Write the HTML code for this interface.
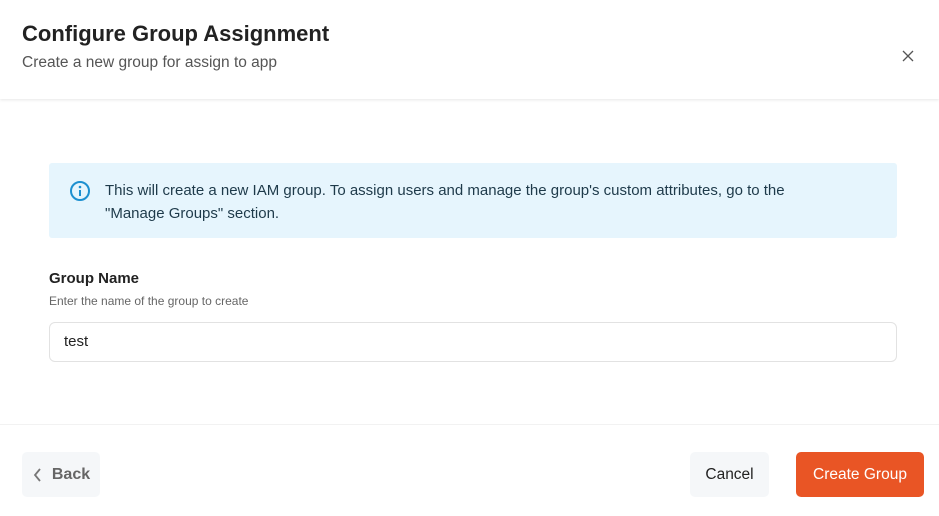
<!DOCTYPE html>
<html><head><meta charset="utf-8"><style>
*{margin:0;padding:0;box-sizing:border-box}
body{width:939px;height:516px;background:#fff;font-family:"Liberation Sans",sans-serif;position:relative;overflow:hidden}
.hdr{position:absolute;left:0;top:0;width:939px;height:99px;background:#fff;box-shadow:0 1px 3px rgba(0,0,0,0.1)}
h1{position:absolute;left:22px;top:21px;font-size:22px;font-weight:bold;color:#222}
.sub{position:absolute;left:22px;top:54px;font-size:15.5px;color:#555}
.x{position:absolute;left:902px;top:50px}
.info{position:absolute;left:49px;top:163px;width:848px;height:75px;background:#e6f5fd;border-radius:3px}
.info svg{position:absolute;left:20px;top:17px}
.info p{position:absolute;left:56px;top:16px;width:740px;font-size:15px;line-height:23px;color:#1e3a4a}
.lbl{position:absolute;left:49px;top:270px;font-size:15px;font-weight:bold;color:#222}
.hint{position:absolute;left:49px;top:294px;font-size:12px;color:#666}
.inp{position:absolute;left:49px;top:322px;width:848px;height:40px;border:1px solid #e2e2e2;border-radius:6px;font-size:15px;color:#222;padding:10px 14px}
.ftr{position:absolute;left:0;top:424px;width:939px;height:1px;background:#f2f2f2}
.btn{position:absolute;top:452px;height:45px;border-radius:5px;font-size:15.5px;display:flex;align-items:center;justify-content:center}
.back{left:22px;width:78px;background:#f5f7f9;color:#666;font-weight:bold;font-size:16px}
.cancel{left:690px;width:79px;background:#f5f7f9;color:#222}
.create{left:796px;width:128px;background:#e95525;color:#fff}
</style></head><body>
<div class="hdr">
<h1>Configure Group Assignment</h1>
<div class="sub">Create a new group for assign to app</div>
<svg class="x" width="12" height="12" viewBox="0 0 12 12"><path d="M1 1L11 11M11 1L1 11" stroke="#555" stroke-width="1.3"/></svg>
</div>
<div class="info">
<svg width="22" height="22" viewBox="0 0 22 22"><circle cx="11" cy="11" r="9" fill="none" stroke="#1e90d0" stroke-width="2"/><circle cx="11" cy="7" r="1.3" fill="#1e90d0"/><path d="M11 10v6" stroke="#1e90d0" stroke-width="2"/></svg>
<p>This will create a new IAM group. To assign users and manage the group's custom attributes, go to the "Manage Groups" section.</p>
</div>
<div class="lbl">Group Name</div>
<div class="hint">Enter the name of the group to create</div>
<div class="inp">test</div>
<div class="ftr"></div>
<div class="btn back"><svg width="12" height="16" viewBox="0 0 12 16" style="margin-right:8px"><path d="M8 2L3 8L8 14" fill="none" stroke="#777" stroke-width="1.8"/></svg>Back</div>
<div class="btn cancel">Cancel</div>
<div class="btn create">Create Group</div>
</body></html>
